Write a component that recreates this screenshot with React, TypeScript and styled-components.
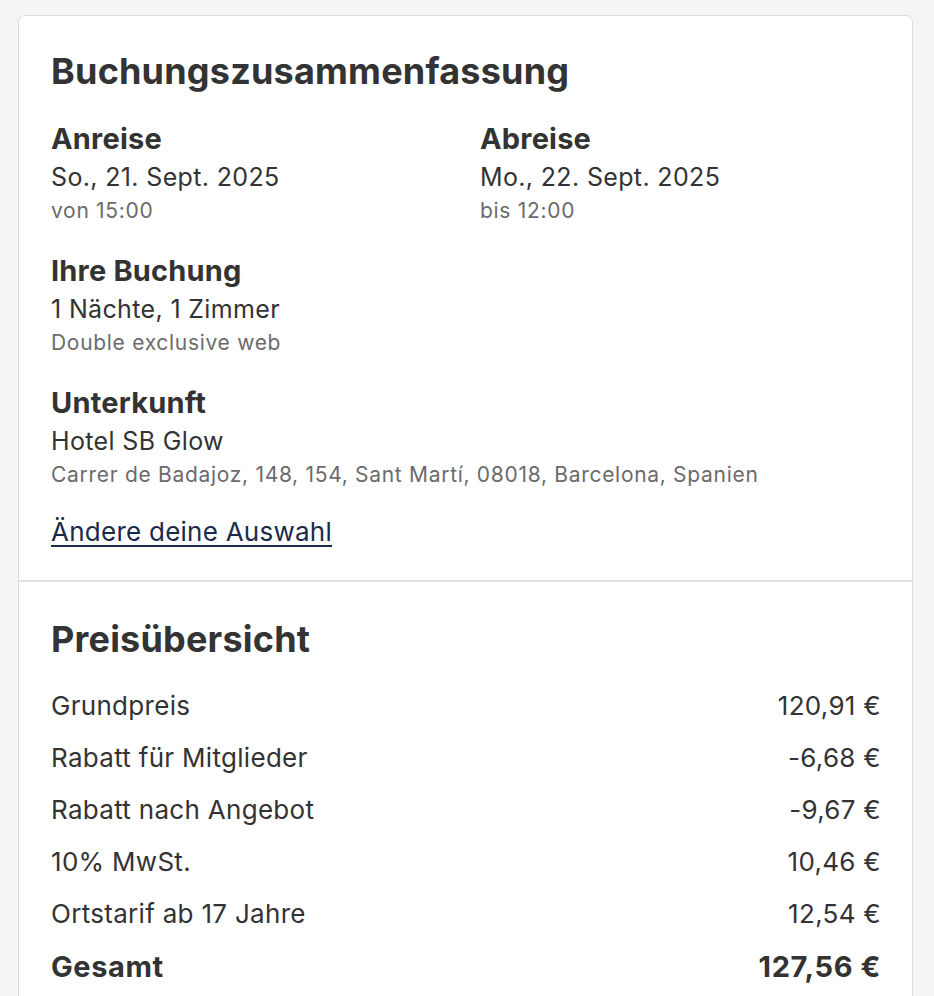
import React from 'react';
import styled, { createGlobalStyle } from 'styled-components';

const GlobalStyle = createGlobalStyle`
  * { box-sizing: border-box; }
  body {
    margin: 0;
    background: #f5f5f5;
    font-family: Inter, Lato, sans-serif;
    color: #333333;
  }
`;

const Page = styled.div`
  padding: 15px 21px 0 18px;
`;

const Card = styled.div`
  background: #ffffff;
  border: 1px solid #dcdcdc;
  border-radius: 7px;
  overflow: hidden;
`;

const Section = styled.section<{ $top: number; $bottom: number }>`
  padding: ${(p) => p.$top}px 31px ${(p) => p.$bottom}px 32px;

  & + & {
    border-top: 2px solid #e2e2e2;
  }
`;

const Title = styled.h2`
  margin: 0;
  font-size: 36px;
  line-height: 44px;
  font-weight: 700;
  letter-spacing: 0.2px;
`;

const Groups = styled.div`
  display: grid;
  grid-template-columns: 1fr 1fr;
  column-gap: 28px;
  row-gap: 28px;
  margin-top: 28px;
`;

const Group = styled.div<{ $full?: boolean }>`
  grid-column: ${(p) => (p.$full ? '1 / -1' : 'auto')};
  display: flex;
  flex-direction: column;
`;

const Label = styled.div`
  font-size: 29px;
  line-height: 36px;
  font-weight: 700;
  letter-spacing: 0.2px;
`;

const Value = styled.div`
  font-size: 25px;
  line-height: 40px;
  letter-spacing: 0.35px;
`;

const Sub = styled.div`
  font-size: 21px;
  line-height: 28px;
  letter-spacing: 0.7px;
  color: #6b6b6b;
`;

const ChangeLink = styled.a`
  display: inline-block;
  margin-top: 25px;
  font-size: 26px;
  line-height: 36px;
  letter-spacing: 0.25px;
  color: #1a2b49;
  text-decoration: underline;
  text-underline-offset: 4px;
  text-decoration-thickness: 2px;
`;

const Rows = styled.div`
  display: flex;
  flex-direction: column;
  gap: 16px;
  margin-top: 27px;
`;

const Row = styled.div<{ $total?: boolean }>`
  display: flex;
  justify-content: space-between;
  font-size: ${(p) => (p.$total ? '29px' : '26px')};
  line-height: 36px;
  letter-spacing: ${(p) => (p.$total ? '0.6px' : '0.3px')};
  font-weight: ${(p) => (p.$total ? 700 : 400)};
  margin-top: ${(p) => (p.$total ? '1px' : '0')};
`;

const prices = [
  ['Grundpreis', '120,91 €'],
  ['Rabatt für Mitglieder', '-6,68 €'],
  ['Rabatt nach Angebot', '-9,67 €'],
  ['10% MwSt.', '10,46 €'],
  ['Ortstarif ab 17 Jahre', '12,54 €'],
];

export default function App() {
  return (
    <>
      <GlobalStyle />
      <Page>
        <Card>
          <Section $top={33} $bottom={30}>
            <Title>Buchungszusammenfassung</Title>
            <Groups>
              <Group>
                <Label>Anreise</Label>
                <Value>So., 21. Sept. 2025</Value>
                <Sub>von 15:00</Sub>
              </Group>
              <Group>
                <Label>Abreise</Label>
                <Value>Mo., 22. Sept. 2025</Value>
                <Sub>bis 12:00</Sub>
              </Group>
              <Group $full>
                <Label>Ihre Buchung</Label>
                <Value>1 Nächte, 1 Zimmer</Value>
                <Sub>Double exclusive web</Sub>
              </Group>
              <Group $full>
                <Label>Unterkunft</Label>
                <Value>Hotel SB Glow</Value>
                <Sub>Carrer de Badajoz, 148, 154, Sant Martí, 08018, Barcelona, Spanien</Sub>
              </Group>
            </Groups>
            <ChangeLink href="#">Ändere deine Auswahl</ChangeLink>
          </Section>
          <Section $top={35} $bottom={31}>
            <Title>Preisübersicht</Title>
            <Rows>
              {prices.map(([name, amount]) => (
                <Row key={name}>
                  <span>{name}</span>
                  <span>{amount}</span>
                </Row>
              ))}
              <Row $total>
                <span>Gesamt</span>
                <span>127,56 €</span>
              </Row>
            </Rows>
          </Section>
        </Card>
      </Page>
    </>
  );
}
